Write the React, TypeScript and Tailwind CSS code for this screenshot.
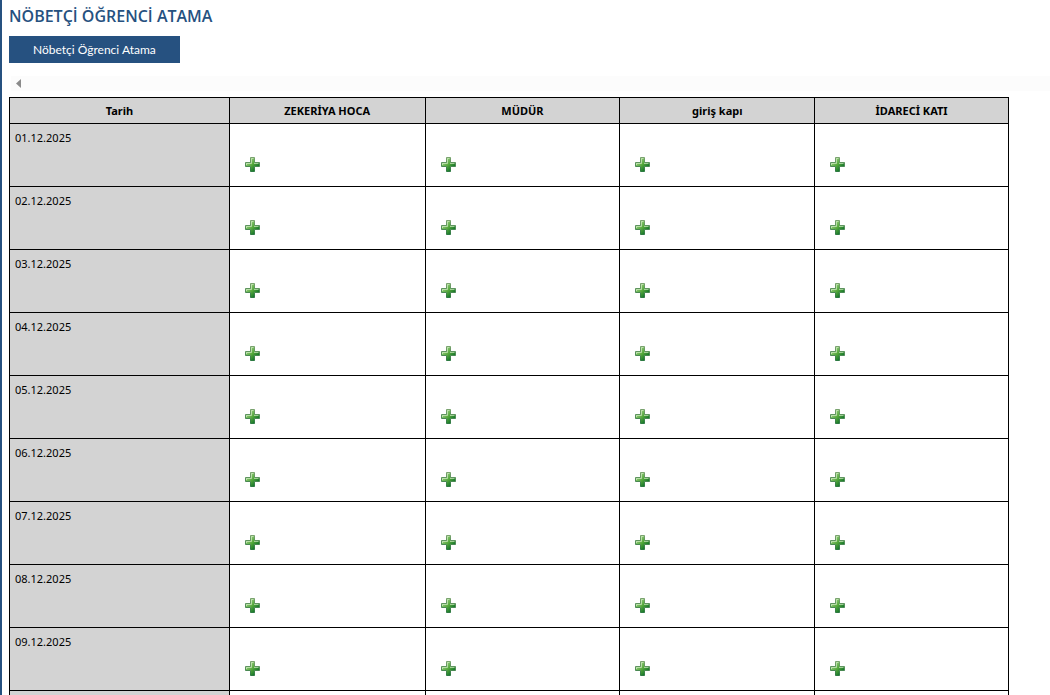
import { useState } from "react";

const places = ["ZEKERİYA HOCA", "MÜDÜR", "giriş kapı", "İDARECİ KATI"];

const days = Array.from({ length: 10 }, (_, i) => `${String(i + 1).padStart(2, "0")}.12.2025`);

function PlusIcon() {
  return (
    <svg width="15" height="15" viewBox="0 0 15 15" className="block">
      <defs>
        <linearGradient id="plusFill" x1="0" y1="0" x2="1" y2="1">
          <stop offset="0.1" stopColor="#a9d893" />
          <stop offset="0.5" stopColor="#55a83c" />
          <stop offset="0.8" stopColor="#12732a" />
        </linearGradient>
        <linearGradient id="plusEdge" x1="0" y1="0" x2="0" y2="1">
          <stop offset="0" stopColor="#7aa36f" />
          <stop offset="1" stopColor="#2d7a42" />
        </linearGradient>
      </defs>
      <path
        d="M5.5.5h4v5h5v4h-5v5h-4v-5h-5v-4h5z"
        fill="url(#plusFill)"
        stroke="url(#plusEdge)"
        strokeLinejoin="round"
      />
      <path d="M6.5 6.5v-5h2M1.5 8V6.5h5M9 6.5h4.5" fill="none" stroke="#e2f5d6" strokeOpacity="0.6" />
    </svg>
  );
}

export default function App() {
  const [selected, setSelected] = useState("");

  return (
    <div className="h-screen overflow-hidden border-l-2 border-[#265180] bg-white font-['Noto_Sans','Open_Sans',sans-serif] text-black">
      <h1 className="pt-1 pl-[7px] font-['Open_Sans',sans-serif] text-base leading-6 font-semibold text-[#265180]">
        NÖBETÇİ ÖĞRENCİ ATAMA
      </h1>

      <button
        type="button"
        className="mt-2 ml-[7px] block h-[27px] bg-[#265180] px-6 font-['Lato',sans-serif] text-xs leading-[27px] text-white"
      >
        Nöbetçi Öğrenci Atama
      </button>

      {/* Yatay kaydırma çubuğu */}
      <div className="mt-[13px] ml-[9px] flex h-[15px] items-center bg-[#fcfcfc] pl-[5px]">
        <button type="button" aria-label="Sola kaydır">
          <svg width="5" height="9" viewBox="0 0 5 9" className="block">
            <path d="M5 0v9L0 4.5z" fill="#8b8b8b" />
          </svg>
        </button>
      </div>

      <div className="mt-[6px] pr-[41px] pl-[7px]">
        <table className="w-full table-fixed border-collapse text-[11px] leading-4">
          <colgroup>
            <col className="w-[22%]" />
            <col className="w-[19.6%]" />
            <col className="w-[19.5%]" />
            <col className="w-[19.5%]" />
            <col />
          </colgroup>
          <thead>
            <tr className="h-[26px] bg-[#d3d3d3]">
              <th className="border border-black font-bold">Tarih</th>
              {places.map(place => (
                <th key={place} className="border border-black font-bold">{place}</th>
              ))}
            </tr>
          </thead>
          <tbody>
            {days.map(day => (
              <tr key={day} className="h-[63px]">
                <td className="border border-black bg-[#d3d3d3] px-[5px] pt-[6px] align-top">{day}</td>
                {places.map(place => (
                  <td key={place} className="border border-black pt-[33px] pl-[15px] align-top">
                    <button
                      type="button"
                      aria-label={`${day} ${place} ekle`}
                      aria-pressed={selected === day + place}
                      onClick={() => setSelected(day + place)}
                      className="block"
                    >
                      <PlusIcon />
                    </button>
                  </td>
                ))}
              </tr>
            ))}
          </tbody>
        </table>
      </div>
    </div>
  );
}
